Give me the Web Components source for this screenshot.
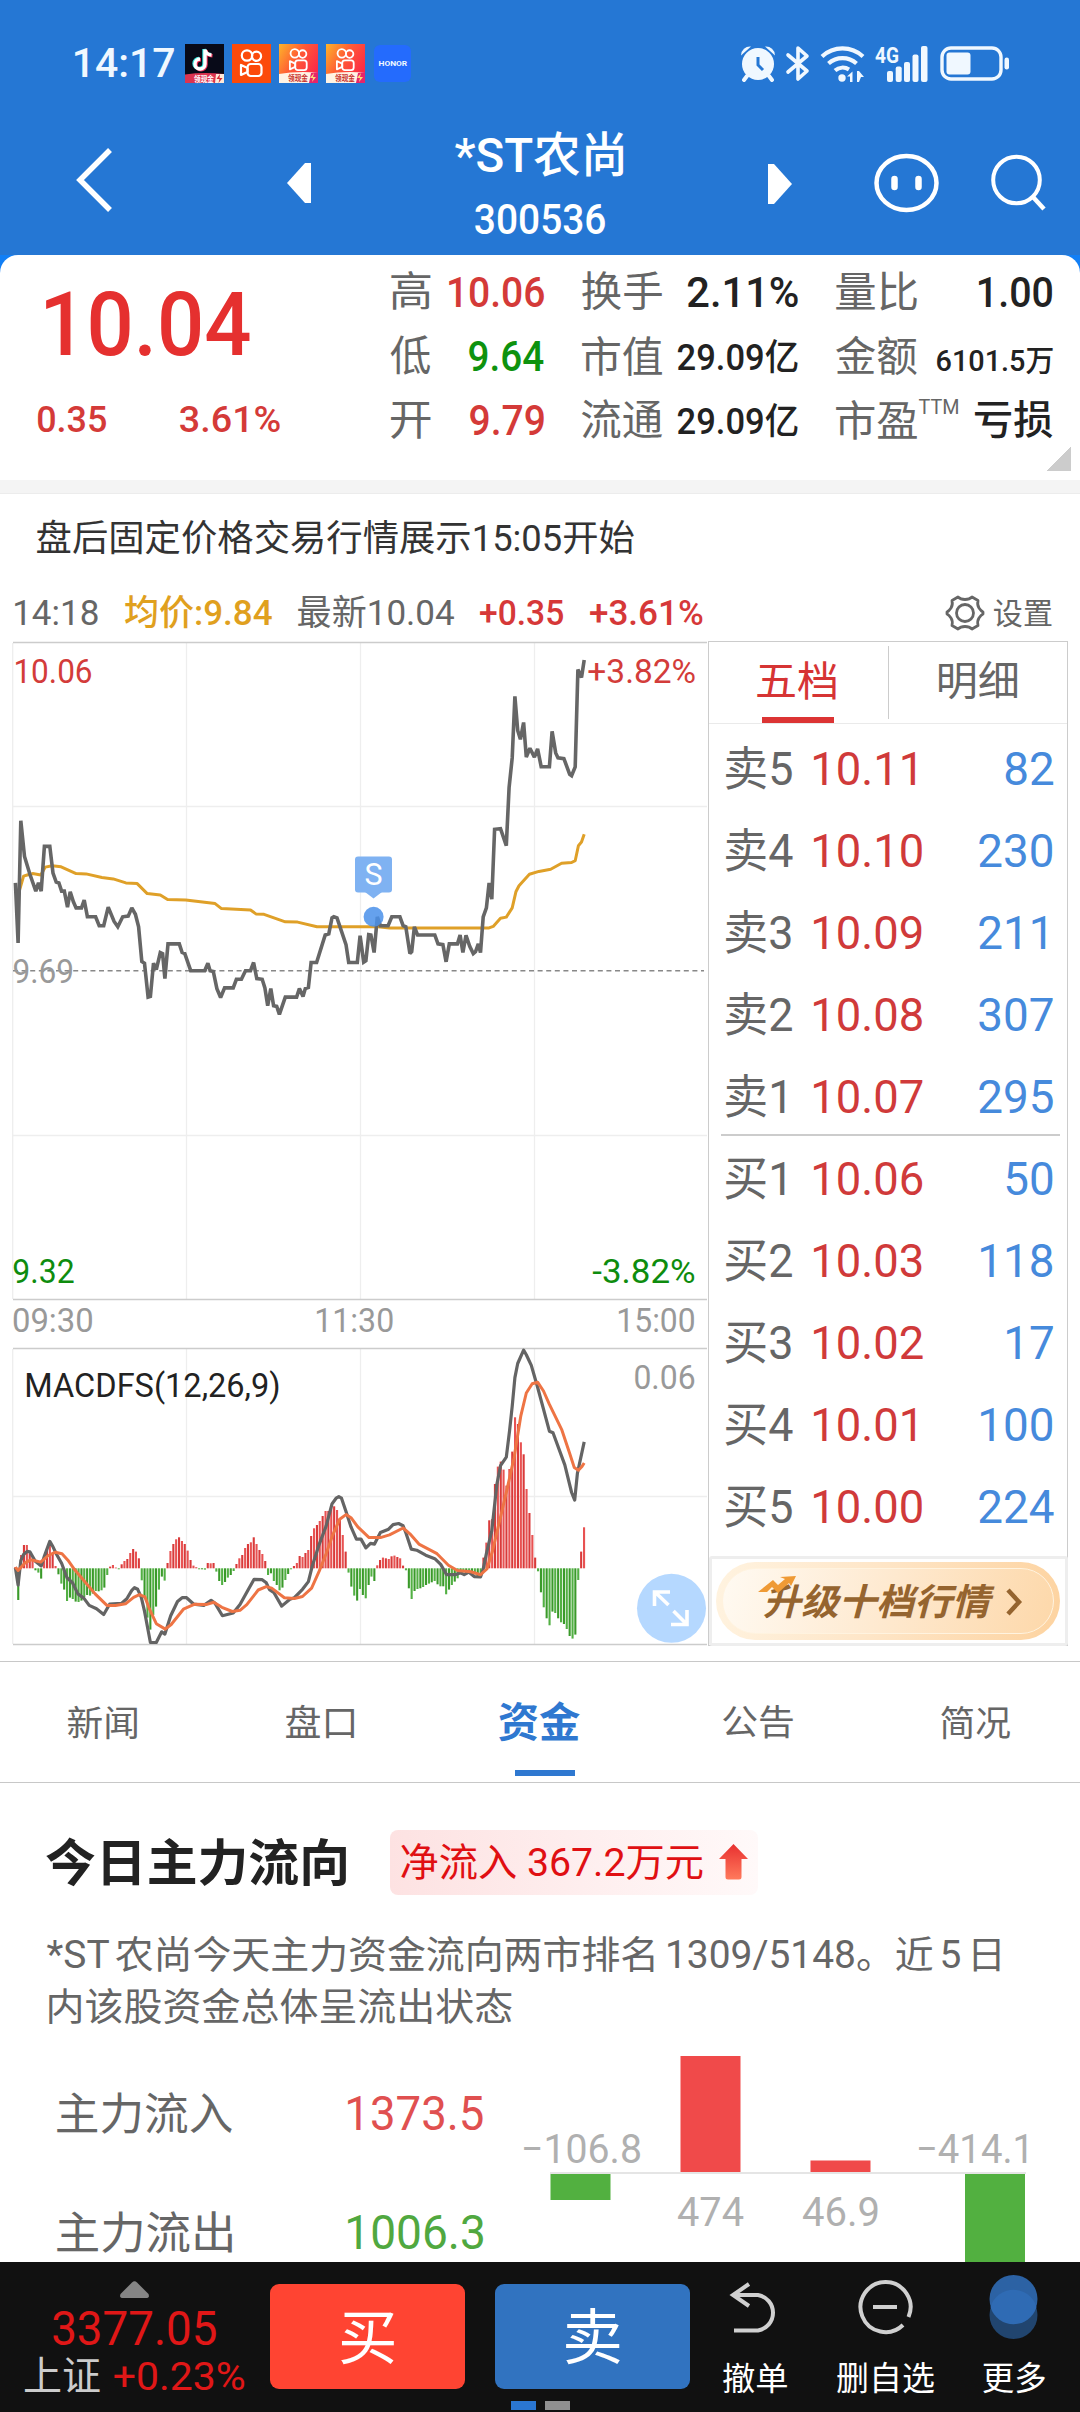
<!DOCTYPE html>
<html lang="zh-CN">
<head>
<meta charset="utf-8">
<title>*ST农尚 300536</title>
<style>
html,body{margin:0;padding:0;background:#fff}
body{width:1080px;height:2412px;overflow:hidden;font-family:Roboto,"Noto Sans CJK SC",sans-serif;color:#222}
</style>
</head>
<body>
<stock-app></stock-app>
<script>
const define = (name, html, extra) => {
  const tpl = document.createElement('template');
  customElements.define(name, class extends HTMLElement {
    connectedCallback() {
      if (this.shadowRoot) return;
      const root = this.attachShadow({ mode: 'open' });
      tpl.innerHTML = typeof html === 'function' ? html(this) : html;
      root.append(tpl.content.cloneNode(true));
      if (extra) extra(this, root);
    }
  });
};

define('stock-app', `
<style>
:host{display:flex;flex-direction:column;width:1080px;height:2412px;overflow:hidden;background:#fff}
.top{background:#2577d4;height:255px;flex:none}
.trade{display:flex;height:1006px;margin-top:13px;padding-left:12px;flex:none}
.under{background:#127ff5;flex:none}
.strip{height:13px;background:#f4f4f4;border-bottom:1px solid #ececec;flex:none}
.notice{display:flex;padding:27px 0 0 37px;height:78px;flex:none;box-sizing:border-box}
action-bar{flex:1}
</style>
<div class="top"><status-bar></status-bar><nav-header></nav-header></div>
<div class="under"><quote-panel></quote-panel></div>
<div class="strip"></div>
<div class="notice"><ink-text w="597" cap="26.4" style="color:#333;margin-top:4px">盘后固定价格交易行情展示15:05开始</ink-text></div>
<price-info></price-info>
<div class="trade"><trend-chart></trend-chart><order-book></order-book></div>
<section-tabs></section-tabs>
<fund-flow></fund-flow>
<action-bar></action-bar>
`);

const kuai = (sc, ty) => `<g transform="translate(19.5 ${ty}) scale(${sc})" fill="none" stroke="#fff" stroke-width="2.2"><circle cx="-4.5" cy="-7.5" r="5.2"/><circle cx="5" cy="-6.700" r="4.6"/><rect x="-4" y="1" width="14" height="12" rx="3.2"/><path d="M-4 5-10.500 2V12L-4 9Z" stroke-linejoin="round"/></g>`;
const kuaiLite = id => `<svg width="39" height="39" viewBox="0 0 39 39"><defs><linearGradient id="${id}" x1="0" y1="0" x2="1" y2=".6"><stop offset="0" stop-color="#fdb52a"/><stop offset=".5" stop-color="#ff5a35"/><stop offset="1" stop-color="#fb2a48"/></linearGradient></defs><rect width="39" height="39" fill="url(#${id})"/>${kuai(.82, 15.5)}<path d="M0 30Q16 27 39 28.5V39H0Z" fill="#fff3e4"/><path d="M32 29 39 28V39H30Z" fill="#e6256a"/><path d="M35 29l-4 5h3l-1 4 4-5h-3Z" fill="#ffd97a"/><text x="9" y="37.3" font-size="8" font-weight="700" fill="#c8302c" textLength="20" lengthAdjust="spacingAndGlyphs">领现金</text></svg>`;

define('status-bar', `
<style>
:host{display:flex;align-items:center;height:127px;padding:0 70px 0 75px;justify-content:space-between;color:#f0f8ff;font-family:Roboto,"Noto Sans CJK SC",sans-serif}
.l,.r{display:flex;align-items:center}
svg{overflow:visible;display:block}
.l{gap:8px}.l ink-text{margin-right:3px}
.h{width:37px;height:37px;border-radius:6px;background:#246bfd;display:flex;align-items:center;justify-content:center;margin-left:1px}
.h ink-text{margin:0}
</style>
<div class="l"><ink-text w="99" cap="29" style="font-weight:500">14:17</ink-text>
<svg width="39" height="39" viewBox="0 0 39 39"><rect width="39" height="39" fill="#080a18"/><g fill="none" stroke-width="3.4"><path d="M20 5.500V20a5 5 0 1 1-5-5M20 5.500q1 5 6.500 5.500" stroke="#36e6e0" transform="translate(-1 -.5)"/><path d="M20 5.500V20a5 5 0 1 1-5-5M20 5.500q1 5 6.500 5.500" stroke="#f0325a" transform="translate(1 .8)"/><path d="M20 5.500V20a5 5 0 1 1-5-5M20 5.500q1 5 6.500 5.500" stroke="#fff"/></g><path d="M0 30.500Q18 28 39 30V39H0Z" fill="#dc3450"/><path d="M31 30h8v9h-9Z" fill="#ffe9d8"/><path d="M35 30l-3.500 5h3l-1 4 4-5h-3Z" fill="#d42a34"/><text x="9" y="37.500" font-size="7.500" font-weight="700" fill="#fff" textLength="20" lengthAdjust="spacingAndGlyphs">领现金</text></svg>
<svg width="39" height="39" viewBox="0 0 39 39"><rect width="39" height="39" fill="#fc4a0a"/>${kuai(1, 19)}</svg>
${kuaiLite('k1')}${kuaiLite('k2')}
<div class="h"><ink-text w="28" cap="5.500" style="font-weight:700">HONOR</ink-text></div></div>
<div class="r">
<svg width="36" height="37" viewBox="0 0 36 37"><g fill="#f0f8ff"><circle cx="18" cy="19" r="16"/><path d="M1 10.500A9 9 0 0 1 11 1.500Z"/><path d="M35 10.500A9 9 0 0 0 25 1.500Z"/></g><g stroke="#f0f8ff" stroke-width="4" stroke-linecap="round"><path d="M7 31 4 35M29 31l3 4"/></g><path d="M18 12v8l5 5" fill="none" stroke="#2577d4" stroke-width="3"/></svg>
<svg style="margin-left:10px" width="24" height="37" viewBox="0 0 24 37"><path d="M2 10 21 26 12 34V3L21 11 2 27" fill="none" stroke="#f0f8ff" stroke-width="3.600" stroke-linejoin="round" stroke-linecap="round"/></svg>
<svg style="margin-left:10px" width="46" height="37" viewBox="0 0 46 37"><g fill="none" stroke="#f0f8ff" stroke-width="4.200"><path d="M2 11.500A30 30 0 0 1 43 11.500"/><path d="M8.500 18.500A21 21 0 0 1 36.500 18.500"/><path d="M15 25.500A12 12 0 0 1 29 24.500"/></g><circle cx="22" cy="33" r="3.700" fill="#f0f8ff"/><path d="M27 31.500 32.500 26.500V37H30V31.500ZM37 26h2l5 6h-3l-2 5h-2Z" fill="#f0f8ff"/></svg>
<svg style="margin-left:9px" width="54" height="37" viewBox="0 0 54 37"><text x="0" y="17.500" font-size="22" font-weight="700" fill="#f0f8ff" textLength="24" lengthAdjust="spacingAndGlyphs">4G</text><g fill="#f0f8ff"><rect x="12" y="26" width="6" height="11" rx="2"/><rect x="20.700" y="21.500" width="6" height="15.500" rx="2"/><rect x="29" y="17" width="6" height="20" rx="2"/><rect x="37.500" y="9.500" width="6" height="27.500" rx="2"/><rect x="46" y="1" width="6.500" height="36" rx="2"/></g></svg>
<svg style="margin-left:10px" width="71" height="37" viewBox="0 0 71 37"><rect x="3" y="3" width="59" height="31" rx="9" fill="none" stroke="#f0f8ff" stroke-width="3.400"/><rect x="7.500" y="7.500" width="24" height="22" rx="3" fill="#f0f8ff"/><rect x="65.500" y="12.500" width="4.500" height="12" rx="2.200" fill="#f0f8ff"/></svg>
</div>`);

define('nav-header', `
<style>
:host{display:flex;height:128px;align-items:flex-start;color:#fff}
svg{display:block;flex:none}
.t{display:flex;flex-direction:column;align-items:center;width:168px;margin:4.500px 0 0 144px;gap:27px}
</style>
<svg style="margin:20px 0 0 74px" width="40" height="66" viewBox="0 0 40 66"><path d="M36 3 6 33 36 63" fill="none" stroke="#fff" stroke-width="5.500"/></svg>
<svg style="margin:36px 0 0 173px" width="24" height="40" viewBox="0 0 24 40"><path d="M0 20 18 0H24V40H18Z" fill="#fff"/></svg>
<div class="t"><ink-text w="168" h="45" style="font-weight:500">*ST农尚</ink-text><ink-text w="130" cap="30" style="font-weight:500;margin-left:1px">300536</ink-text></div>
<svg style="margin:37px 0 0 145px" width="24" height="40" viewBox="0 0 24 40"><path d="M24 20 6 0H0V40H6Z" fill="#fff"/></svg>
<svg style="margin:26px 0 0 81px" width="67" height="61" viewBox="0 0 67 61"><ellipse cx="33.500" cy="30" rx="30" ry="27" fill="none" stroke="#fff" stroke-width="4.500"/><path d="M21.500 26v8M45.500 26v8" stroke="#fff" stroke-width="6.500" stroke-linecap="round"/></svg>
<svg style="margin:26px 0 0 51px" width="56" height="58" viewBox="0 0 56 58"><circle cx="25.500" cy="27" r="23.300" fill="none" stroke="#fff" stroke-width="4"/><path d="M42 44 53 56" stroke="#fff" stroke-width="4.500"/></svg>
`);

define('stat-pair', `
<style>:host{display:flex;justify-content:space-between;align-items:flex-end}.v{margin-bottom:3.700px}:host([flush]) .v{margin:0}.l{display:flex;align-items:flex-start;color:#666;gap:2px}</style>
<div class="l"><slot name="label"></slot></div><div class="v"><slot></slot></div>`);

define('quote-panel', `
<style>
:host{display:flex;height:225px;background:#fff;border-radius:18px 18px 0 0;position:relative}
.p{width:390.500px;display:flex;flex-direction:column;padding-top:37.500px;box-sizing:border-box;flex:none;color:#d43a38;font-weight:500}
.p div{display:flex;gap:74px;margin:48.500px 0 0 37.500px}
.g{display:grid;grid-template-columns:153px 215.500px 216px;grid-template-rows:56px 64px 64px;column-gap:38.500px;align-items:end}
.m{font-weight:500}.r{color:#d43a38;font-weight:500}.gr{color:#0e920e;font-weight:500}
.c{position:absolute;right:9px;bottom:9px;width:24px;height:24px;background:linear-gradient(135deg,transparent 50%,#ccc 50%)}
</style>
<div class="p"><ink-text w="204" cap="64" style="margin-left:46px;color:#e5302f">10.04</ink-text>
<div><ink-text w="68" cap="27">0.35</ink-text><ink-text w="100" cap="27">3.61%</ink-text></div></div>
<div class="g">
<stat-pair><ink-text slot="label" w="39.500" h="39">高</ink-text><ink-text class="r" w="95" cap="30">10.06</ink-text></stat-pair>
<stat-pair><ink-text slot="label" w="80" h="39">换手</ink-text><ink-text w="110" cap="30" class="m">2.11%</ink-text></stat-pair>
<stat-pair><ink-text slot="label" w="81" h="39">量比</ink-text><ink-text w="73" cap="30" class="m">1.00</ink-text></stat-pair>
<stat-pair><ink-text slot="label" w="39.500" h="39.500">低</ink-text><ink-text class="gr" w="74.500" cap="30">9.64</ink-text></stat-pair>
<stat-pair><ink-text slot="label" w="80" h="39.500">市值</ink-text><ink-text w="119.500" cap="26" class="m">29.09亿</ink-text></stat-pair>
<stat-pair><ink-text slot="label" w="81" h="39.500">金额</ink-text><ink-text w="115.500" cap="21.500" class="m">6101.5万</ink-text></stat-pair>
<stat-pair><ink-text slot="label" w="39.500" h="37">开</ink-text><ink-text class="r" w="74" cap="30">9.79</ink-text></stat-pair>
<stat-pair><ink-text slot="label" w="80" h="39.500">流通</ink-text><ink-text w="119.500" cap="26" class="m">29.09亿</ink-text></stat-pair>
<stat-pair flush><ink-text slot="label" w="81" h="39.500">市盈</ink-text><ink-text slot="label" w="39" cap="15">TTM</ink-text><ink-text w="77.500" h="38" class="m">亏损</ink-text></stat-pair>
</div><div class="c"></div>`);

define('price-info', `
<style>:host{display:flex;height:56px;padding-left:15px;box-sizing:border-box;align-items:flex-start;padding-top:27.500px;flex:none;color:#666}
.r{color:#d63838;font-weight:500}svg{flex:none;display:block}</style>
<ink-text w="82.500" cap="25.700">14:18</ink-text>
<ink-text w="147" cap="25.700" style="margin-left:27px;color:#e0a01e;font-weight:500">均价:9.84</ink-text>
<ink-text w="156" cap="25.700" style="margin-left:26.500px">最新10.04</ink-text>
<ink-text w="83" cap="25.700" class="r" style="margin-left:26px">+0.35</ink-text>
<ink-text w="112.500" cap="25.700" class="r" style="margin-left:27px">+3.61%</ink-text>
<svg style="margin:-5px 0 0 242.500px" width="40" height="36" viewBox="-20 -18 40 36"><path d="M-7-16Q-4.500-13.500 0-13.500T7-16L13-12.500Q12-8 14-5T18-1V1Q16 2 14 5T13 12.500L7 16Q4.500 13.500 0 13.500T-7 16L-13 12.500Q-12 8-14 5T-18 1V-1Q-16-2-14-5T-13-12.500Z" fill="none" stroke="#666" stroke-width="2.800" stroke-linejoin="round"/><circle r="8.500" fill="none" stroke="#666" stroke-width="2.800"/></svg>
<ink-text w="57.500" h="27.500" style="margin:-1px 0 0 9px">设置</ink-text>`);

/* signed MACD histogram, one value per traded minute */
const hist = [4,-95,40,70,70,45,25,-6,-13,-31,30,58,75,45,7,-18,-46,-64,-98,-88,-92,-100,-101,-97,-86,-80,-82,-76,-68,-69,-66,-58,-20,5,10,2,-3,12,22,28,46,58,50,30,-36,-90,-148,-184,-140,-115,-64,-25,-37,16,52,73,87,93,82,73,53,25,8,3,-3,-3,-4,16,15,16,-10,-38,-50,-41,-28,-20,-8,13,30,40,61,73,78,93,73,55,43,22,-20,-15,-38,-50,-66,-58,-35,-17,-3,7,16,37,34,46,55,97,120,130,142,157,172,172,190,186,175,145,100,50,-13,-55,-82,-97,-62,-80,-90,-50,-25,-38,9,25,32,30,28,36,38,34,30,8,-6,-60,-92,-68,-62,-60,-56,-50,-46,-42,-38,-48,-54,-54,-78,-64,-50,-40,-30,-14,-12,-18,-10,-14,-18,-25,-20,32,77,144,148,253,305,320,296,248,298,350,453,433,378,342,238,166,100,32,-9,-72,-117,-150,-171,-130,-134,-150,-162,-167,-182,-203,-211,-199,-35,50,123];
const bars = hist.map((v, i) => {
  const h = Math.max(Math.abs(v) / 3, .7), x = 14.3 + 2.872 * i;
  const c = v > 0 ? (i % 2 ? '#d93a3a' : '#e85252') : (i % 2 ? '#3a9a2a' : '#52b043');
  return `<rect x="${x.toFixed(1)}" y="${(v > 0 ? 1568.3 - h : 1568.3).toFixed(1)}" width="2.1" height="${h.toFixed(1)}" fill="${c}"/>`;
}).join('');
const scale = (s, sx, sy, oy) => s.trim().split(/\s+/).map(p => { const [x, y] = p.split(','); return (x / sx).toFixed(1) + ',' + (oy + y / sy).toFixed(1); }).join(' ');
const price = scale(`34,1072 40,1240 46,898 54,998 66,1048 79,1095 85,1072 91,1095 98,970 110,970 117,1045 124,1070 130,1072 136,1095 142,1095 149,1140 155,1097 162,1125 168,1142 180,1142 186,1120 193,1167 211,1167 219,1192 229,1192 239,1140 252,1180 260,1195 271,1167 283,1165 291,1142 299,1160 306,1195 313,1292 319,1297 327,1392 332,1390 339,1297 345,1315 354,1267 359,1270 364,1340 371,1243 396,1243 402,1267 408,1270 421,1318 452,1318 459,1297 464,1318 471,1320 479,1368 487,1393 496,1366 515,1366 522,1342 533,1342 542,1318 553,1318 560,1295 567,1340 579,1342 585,1366 591,1416 598,1368 604,1416 611,1418 617,1440 630,1392 655,1392 661,1368 669,1390 674,1368 681,1365 687,1295 699,1295 718,1218 726,1215 733,1170 737,1167 744,1170 764,1245 770,1295 789,1295 795,1220 803,1294 808,1290 814,1217 819,1218 826,1267 833,1167 840,1192 857,1192 865,1167 883,1167 890,1192 896,1195 905,1270 909,1265 915,1195 922,1218 960,1218 967,1243 978,1245 985,1293 992,1243 1010,1243 1016,1218 1022,1267 1029,1219 1037,1250 1045,1270 1050,1265 1056,1243 1061,1267 1067,1167 1074,1142 1080,1072 1086,1118 1092,922 1105,920 1118,968 1124,805 1131,722 1137,550 1143,645 1149,670 1156,623 1162,720 1170,695 1180,720 1187,697 1195,747 1213,747 1219,648 1227,708 1232,722 1245,724 1258,768 1262,772 1270,747 1276,475 1284,497 1290,448`, 2.208, 2.8, 500);
const avg = scale(`40,1105 46,1080 52,1053 60,1050 72,1046 90,1050 100,1028 115,1024 135,1027 168,1046 190,1047 225,1057 250,1061 278,1072 303,1074 325,1102 354,1106 370,1119 410,1120 475,1130 489,1144 553,1148 565,1159 583,1160 630,1181 657,1182 700,1195 835,1195 860,1198 1080,1198 1089,1194 1105,1171 1118,1168 1131,1142 1139,1097 1146,1080 1169,1048 1190,1040 1216,1034 1240,1017 1262,1015 1270,1010 1277,968 1284,958 1290,936`, 2.208, 2.8, 500);
const dif = scale(`34,1327 40,1372 46,1308 52,1292 60,1284 66,1285 78,1310 91,1322 98,1296 110,1258 117,1272 124,1290 136,1315 148,1353 160,1366 172,1395 185,1406 197,1425 213,1434 229,1449 242,1422 268,1420 280,1408 291,1386 297,1379 304,1383 312,1404 319,1440 332,1522 345,1522 357,1494 364,1500 377,1452 392,1415 402,1405 412,1405 428,1422 450,1425 466,1412 475,1420 491,1452 515,1445 530,1423 549,1382 561,1357 579,1358 588,1366 595,1384 605,1392 622,1427 640,1409 650,1405 668,1383 681,1363 690,1320 705,1265 720,1218 733,1160 742,1145 748,1141 754,1145 764,1180 775,1220 787,1252 797,1252 808,1275 818,1263 827,1265 840,1235 858,1226 868,1214 880,1211 890,1217 897,1238 908,1278 920,1281 940,1294 960,1303 973,1318 986,1345 1005,1345 1017,1340 1025,1345 1035,1338 1047,1350 1061,1351 1067,1330 1074,1290 1086,1230 1097,1110 1105,1060 1118,1038 1125,970 1131,905 1137,830 1143,793 1156,758 1162,770 1173,798 1187,855 1213,970 1221,974 1247,1058 1262,1130 1269,1150 1275,1080 1290,998`, 2.208, 2.613, 1060);
const dea = scale(`34,1325 40,1334 55,1314 68,1306 90,1312 105,1296 122,1286 137,1290 150,1307 165,1332 185,1360 210,1395 236,1425 255,1425 277,1421 295,1404 308,1397 320,1403 330,1435 345,1473 365,1487 378,1475 405,1435 430,1422 455,1423 472,1417 490,1430 513,1441 530,1438 545,1423 570,1385 588,1376 600,1380 628,1405 650,1407 668,1402 688,1380 705,1335 720,1290 735,1240 750,1200 764,1188 775,1196 790,1220 815,1248 840,1248 860,1241 890,1223 905,1238 925,1265 965,1290 990,1320 1010,1334 1040,1337 1061,1345 1075,1330 1087,1285 1100,1220 1120,1120 1135,1040 1150,930 1162,870 1175,846 1187,842 1200,865 1213,900 1240,965 1257,1025 1268,1065 1277,1072 1285,1062 1290,1053`, 2.208, 2.613, 1060);
const lab = (x, y, w, cap, fill, s, wt) => `<text x="${x - cap * .07}" y="${y}" font-size="${(cap / .711).toFixed(1)}" textLength="${w + cap * .14}" lengthAdjust="spacingAndGlyphs" fill="${fill}" font-weight="${wt || 400}">${s}</text>`;

define('trend-chart', `
<style>:host{display:block;width:696px;height:1006px;flex:none;font-family:Roboto,"Noto Sans CJK SC",sans-serif}svg{display:block;overflow:visible}</style>
<svg width="696" height="1006" viewBox="12 641 696 1006">
<g fill="none" stroke="#eee" stroke-width="1.300"><path d="M186.500 643V1299M360.500 643V1299M534.500 643V1299M13 806.500H707M13 1135.500H707M12.700 643V1299M186.500 1349V1644M360.500 1349V1644M534.500 1349V1644M13 1496.500H707M12.700 1349V1644"/></g>
<g fill="none" stroke="#ccc" stroke-width="1.300"><path d="M13 642.500H707M13 1299.500H707M13 1348.500H707M13 1644.500H707"/></g>
<path d="M13 970.700H704" stroke="#888" stroke-width="1.600" stroke-dasharray="5 3.600"/>
${lab(15, 682.5, 76, 23, '#d33c3a', '10.06')}${lab(589, 682.5, 105.5, 23, '#d33c3a', '+3.82%')}
${lab(14, 983, 58.5, 23, '#999', '9.69')}${lab(14, 1283, 59, 23.5, '#0e8c0e', '9.32')}${lab(594, 1283, 100, 23.5, '#0e8c0e', '-3.82%')}
${lab(13.6, 1332, 78.5, 24, '#999', '09:30')}${lab(316, 1332, 76.5, 24, '#999', '11:30')}${lab(618, 1332, 76, 24, '#999', '15:00')}
<polyline points="${avg}" fill="none" stroke="#dfa028" stroke-width="3" stroke-linejoin="round"/>
<polyline points="${price}" fill="none" stroke="#666" stroke-width="3.600" stroke-linejoin="miter" stroke-miterlimit="2"/>
<g><rect x="355" y="856.500" width="37" height="36" rx="3" fill="#7fb2f2"/><path d="M365 892h17l-8.500 6.500Z" fill="#7fb2f2"/><circle cx="373.600" cy="916.800" r="10" fill="#4a90ea" opacity=".85"/><text x="373.500" y="884.500" font-size="32" fill="#fff" text-anchor="middle" textLength="18" lengthAdjust="spacingAndGlyphs">S</text></g>
${bars}
<polyline points="${dif}" fill="none" stroke="#646464" stroke-width="3.200" stroke-linejoin="round"/>
<polyline points="${dea}" fill="none" stroke="#ee7444" stroke-width="3" stroke-linejoin="round"/>
${lab(26, 1396.7, 253, 23.4, '#222', 'MACDFS(12,26,9)')}${lab(635, 1388.7, 59, 23, '#999', '0.06')}
<circle cx="671.500" cy="1608.300" r="34.500" fill="#b5d8ff"/><path d="M668.500 1605 655.500 1592.500M654.500 1606V1592H670M673.500 1611 686.500 1624M687 1610V1624.500H671" fill="none" stroke="#fff" stroke-width="3.600"/>
</svg>`);

define('book-row', el => `
<style>:host{display:grid;grid-template-columns:88px 1fr auto;align-items:center;height:82px}
.a{color:#666}.b{color:#d03a3a}.c{color:#468adc}</style>
<ink-text class="a" ref="卖5" w="66" cap="33.500">${el.getAttribute('label')}</ink-text>
<ink-text class="b" ref="10.08" w="108" cap="33.500">${el.getAttribute('price')}</ink-text>
<ink-text class="c" ref="230" w="73" cap="33.500">${el.getAttribute('qty')}</ink-text>`);

define('ladder-button', `
<style>
:host{display:flex;height:84px;border:3px solid #eee;border-radius:3px;box-sizing:content-box;margin:0 -1px -1px 0;align-items:center;justify-content:center}
.p{width:344px;height:78px;border-radius:39px;background:linear-gradient(100deg,#fff3e0,#fee6c8 45%,#fdd3a0);box-sizing:border-box;padding:6px;display:flex;margin-right:2px}
.i{flex:1;border-radius:33px;border:1.500px solid #fff3df;background:linear-gradient(105deg,#fffaf2,#fee9cf 50%,#fdd8aa);display:flex;align-items:center;padding-left:42px;color:#95642f}
svg{display:block;flex:none;overflow:visible}
</style>
<div class="p"><div class="i">
<svg width="34" height="50" viewBox="0 0 34 50" style="margin:-18px -27px 0 -7px;z-index:1;position:relative"><path d="M0 25 15 13 20 18 27 12 22 10 38 9 33 19 31 16 20 26 14 20 9 25Z" fill="#ef9a35"/></svg>
<ink-text w="231" h="35" style="font-style:italic;font-weight:700;margin:2px 0 0 -1px">升级十档行情</ink-text>
<svg style="margin:2px 0 0 11px" width="18" height="28" viewBox="0 0 18 28"><path d="M2 2 13 14 2 26" fill="none" stroke="#95642f" stroke-width="4.500"/></svg>
</div></div>`);

define('order-book', `
<style>
:host{display:flex;flex-direction:column;width:358px;height:1003px;border:1.300px solid #ccc;box-sizing:content-box}
.t{display:grid;grid-template-columns:179px 1fr;height:81px;border-bottom:1.300px solid #eaeaea;flex:none}
.t div{display:flex;flex-direction:column;align-items:center;justify-content:space-between;padding-top:20px;color:#666}
.t div+div{border-left:1.300px solid #ccc;margin:4px 0;padding-top:16px}
.t .on{color:#d63434}.on i{display:block;width:72px;height:6px;background:#dc3434;margin-left:-2px}
.on ink-text{margin-left:-4px}
.s,.b{padding:0 15px 0 17px}
.s{padding-top:4px}.b{flex:1}
.hr{height:2px;background:#ccc;margin:-4px 7px 2px 12px;flex:none}
</style>
<div class="t"><div class="on"><ink-text w="79" h="38.500">五档</ink-text><i></i></div><div><ink-text w="78" h="38">明细</ink-text></div></div>
<div class="s">
<book-row label="卖5" price="10.11" qty="82"></book-row><book-row label="卖4" price="10.10" qty="230"></book-row><book-row label="卖3" price="10.09" qty="211"></book-row><book-row label="卖2" price="10.08" qty="307"></book-row><book-row label="卖1" price="10.07" qty="295"></book-row></div>
<div class="hr"></div>
<div class="b">
<book-row label="买1" price="10.06" qty="50"></book-row><book-row label="买2" price="10.03" qty="118"></book-row><book-row label="买3" price="10.02" qty="17"></book-row><book-row label="买4" price="10.01" qty="100"></book-row><book-row label="买5" price="10.00" qty="224"></book-row></div>
<ladder-button></ladder-button>`);

define('section-tabs', `
<style>
:host{display:grid;grid-template-columns:204px 231px 208px 229px 207px;height:120px;margin-top:14px;border-top:1.500px solid #c8c8c8;border-bottom:1.500px solid #c8c8c8;color:#666;flex:none}
div{display:flex;justify-content:center;align-items:flex-start;padding-top:44px}
.on{flex-direction:column;align-items:center;justify-content:flex-start;padding-top:40px;color:#2f78d0;font-weight:700}
.on i{display:block;width:60px;height:6px;background:#2f78d0;margin:28.500px 0 0 11px}
</style>
<div><ink-text w="69" h="33">新闻</ink-text></div><div><ink-text w="68" h="33">盘口</ink-text></div>
<div class="on"><ink-text w="81" h="39.500">资金</ink-text><i></i></div>
<div><ink-text w="70" h="33">公告</ink-text></div><div><ink-text w="69" h="33">简况</ink-text></div>`);

define('fund-flow', `
<style>
:host{display:flex;flex-direction:column;height:479px;color:#666;flex:none}
.h{display:flex;align-items:center;padding:46.500px 0 0 46px;gap:43.500px}
.k{display:flex;align-items:center;width:368px;height:65px;border-radius:8px;background:linear-gradient(90deg,#fde2e2,#fff9f9);color:#e00f12;box-sizing:border-box;padding-left:11px;gap:17px}
.p{display:flex;flex-direction:column;padding:41px 0 0 47px;gap:16px}
.g{display:flex;height:209px;margin-top:30.500px}
.t{width:483px;display:grid;grid-template-columns:176px 135px;justify-content:space-between;padding:39px 0 0 57px;box-sizing:border-box;grid-auto-rows:119px;align-items:start;flex:none}
svg.b{margin-left:37px;display:block;overflow:visible}
</style>
<div class="h"><ink-text w="300" h="48.500" style="color:#222;font-weight:700;margin-top:1px">今日主力流向</ink-text>
<div class="k"><ink-text w="301.500" h="36">净流入 367.2万元</ink-text><svg width="29" height="36" viewBox="0 0 29 36"><defs><linearGradient id="u" x1="0" y1="0" x2="0" y2="1"><stop offset="0" stop-color="#e83030"/><stop offset="1" stop-color="#ff7a5c"/></linearGradient></defs><path d="M14.500 0 29 15H22.500V33Q22.500 35.500 20 35.500H9Q6.500 35.500 6.500 33V15H0Z" fill="url(#u)"/></svg></div></div>
<div class="p"><ink-text w="954" h="36" ws="-0.1">*ST 农尚今天主力资金流向两市排名 1309/5148。近 5 日</ink-text><ink-text w="463" h="36" style="margin-left:1.500px">内该股资金总体呈流出状态</ink-text></div>
<div class="g"><div class="t">
<ink-text w="175" h="42">主力流入</ink-text><ink-text w="135" cap="34" style="color:#e05050;margin-top:4px">1373.5</ink-text>
<ink-text w="175" h="42">主力流出</ink-text><ink-text w="135" cap="34" style="color:#50a840;margin-top:4px">1006.3</ink-text></div>
<svg class="b" width="520" height="209" viewBox="520 2053 520 209" font-family="Roboto,sans-serif">
<path d="M550 2172H1026" stroke="#ddd" stroke-width="1.600"/>
<path d="M680.500 2055h60V2171h-60ZM810.500 2159.500h60V2171h-60Z" fill="#f04a4a"/><path d="M550.500 2173h60v26h-60ZM965 2173h60v89h-60Z" fill="#52b040"/>
${lab(523, 2162, 117, 29.3, '#b0b0b0', '−106.8')}${lab(679, 2225, 63, 29.3, '#b0b0b0', '474')}${lab(804, 2225, 74, 29.3, '#b0b0b0', '46.9')}${lab(918, 2162, 114, 29.3, '#b0b0b0', '−414.1')}
</svg></div>`);

define('action-bar', `
<style>
:host{display:flex;height:150px;background:#111;align-items:flex-start;color:#fff;position:relative}
svg{display:block}
.i{width:268px;margin-right:2px;display:flex;flex-direction:column;align-items:center;padding-top:18.500px;color:#e01717;flex:none}
.i>div{display:flex;gap:14px;align-items:flex-start;align-self:flex-start;margin:12px 0 0 25px}
.btn{width:195px;height:105px;border-radius:9px;margin:22px 30px 0 0;display:flex;justify-content:center;background:#ff4432;box-sizing:border-box;padding-top:29px;flex:none}
.s{background:#3173c0;padding-top:25px}
.a{display:flex;flex-direction:column;align-items:center;padding-top:10px;flex:none}
.a svg{margin-bottom:11px}
.d{position:absolute;left:511px;bottom:2px;display:flex;gap:9px}.d i{width:25px;height:9px;background:#2a76d2}.d i+i{background:#909090}
</style>
<div class="i"><svg width="31" height="17" viewBox="0 0 31 17"><path d="M13 1.500Q15.500-.8 18 1.500L29.500 13Q31 17 27 17H4Q0 17 1.500 13Z" fill="#858585"/></svg>
<ink-text w="163" cap="34" style="margin:14.500px 0 0 0">3377.05</ink-text>
<div><ink-text w="75" h="35" style="color:#ccc">上证</ink-text><ink-text w="130" cap="28.500" style="margin-top:4px">+0.23%</ink-text></div></div>
<div class="btn"><ink-text w="53" h="52">买</ink-text></div><div class="btn s"><ink-text w="54" h="56">卖</ink-text></div>
<div class="a" style="margin-left:3px"><svg width="64" height="80" viewBox="0 0 64 80"><path d="M26 12 10 23 26 34M10 23H35A18 18 0 0 1 35 58.500H11" fill="none" stroke="#d0d0d0" stroke-width="4"/></svg><ink-text w="64" h="30.500">撤单</ink-text></div>
<div class="a" style="margin-left:50px"><svg width="60" height="80" viewBox="0 0 60 80"><path d="M53.500 46A25 25 0 1 0 48 54" transform="translate(-1 -1)" fill="none" stroke="#d0d0d0" stroke-width="4"/><path d="M17 35H41" stroke="#d0d0d0" stroke-width="4"/></svg><ink-text w="97" h="30.500">删自选</ink-text></div>
<div class="a" style="margin-left:49px"><svg width="62" height="80" viewBox="0 0 62 80"><circle cx="30.500" cy="43" r="24" fill="#21456f"/><circle cx="30.500" cy="27" r="24" fill="#2c62a4"/><path d="M7.500 35A24 24 0 0 1 53.500 35A24 24 0 0 1 7.500 35Z" fill="#2f6bb4"/></svg><ink-text w="62" h="30.500">更多</ink-text></div>
<div class="d"><i></i><i></i></div>`);

/* A text run sized by its visible extent: cap (digit height) or h (full ink height), and w (ink width). */
const ctx = document.createElement('canvas').getContext('2d');
define('ink-text', `<style>:host{display:block;flex:none}span{display:block;width:max-content;white-space:pre;transform-origin:0 0}</style><span><slot></slot></span>`, (el, root) => {
  const cs = getComputedStyle(el), span = root.querySelector('span');
  const num = n => parseFloat(el.getAttribute(n));
  ctx.font = `${cs.fontStyle} ${cs.fontWeight} 100px ${cs.fontFamily}`;
  const ws = num('ws') || 0;
  ctx.wordSpacing = ws * 100 + 'px';
  const text = el.textContent, m = ctx.measureText(text), r = ctx.measureText(el.getAttribute('ref') || text);
  const H = ctx.measureText('H').actualBoundingBoxAscent;
  const cap = el.hasAttribute('cap');
  const fs = cap ? num('cap') / H * 100 : num('h') / (m.actualBoundingBoxAscent + m.actualBoundingBoxDescent) * 100;
  const k = fs / 100;
  const sx = num('w') / ((r.actualBoundingBoxLeft + r.actualBoundingBoxRight) * k);
  const top = cap ? H * k : m.actualBoundingBoxAscent * k;
  const width = el.hasAttribute('ref') ? num('w') + (m.width - r.width) * k * sx : num('w');
  const base = fs + (m.fontBoundingBoxAscent - m.fontBoundingBoxDescent) * k / 2;
  el.style.width = width + 'px';
  el.style.height = (cap ? num('cap') : num('h')) + 'px';
  span.style.fontSize = fs + 'px';
  span.style.wordSpacing = ws + 'em';
  span.style.lineHeight = 2 * fs + 'px';
  span.style.transform = `translate(${r.actualBoundingBoxLeft * k * sx}px,${top - base}px) scaleX(${sx})`;
  span.style.marginBottom = -2 * fs + 'px';
});
</script>
</body>
</html>
